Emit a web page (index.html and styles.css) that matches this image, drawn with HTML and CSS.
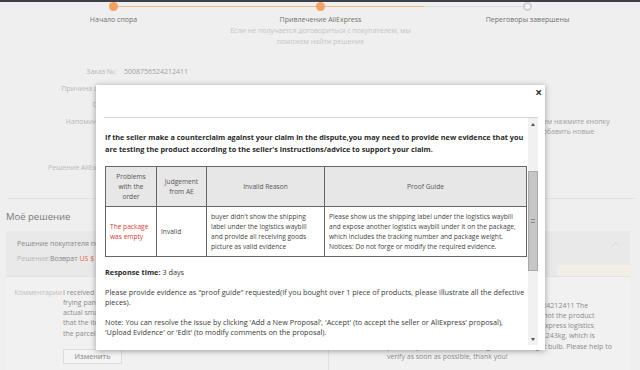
FILE: index.html
```html
<!DOCTYPE html>
<html lang="ru">
<head>
    <meta charset="UTF-8">
    <title>Спор по заказу</title>
    <link rel="stylesheet" href="styles.css">
</head>
<body>
    <div class="topbar"></div>

    <div class="steps">
        <div class="step">
            <div class="step-head">
                <span class="seg"></span>
                <span class="dot"></span>
                <span class="seg on"></span>
            </div>
            <div class="step-title">Начало спора</div>
        </div>
        <div class="step">
            <div class="step-head">
                <span class="seg on"></span>
                <span class="dot"></span>
                <span class="seg on"></span>
            </div>
            <div class="step-title">Привлечение AliExpress</div>
            <div class="step-desc">Если не получается договориться с покупателем, мы<br>поможем найти решение</div>
        </div>
        <div class="step">
            <div class="step-head">
                <span class="seg off"></span>
                <span class="dot todo"></span>
                <span class="seg"></span>
            </div>
            <div class="step-title">Переговоры завершены</div>
        </div>
    </div>

    <div class="info">
        <div class="info-row">
            <div class="info-label">Заказ №:</div>
            <div class="info-value">5008756524212411</div>
        </div>
        <div class="info-row">
            <div class="info-label">Причина спора:</div>
            <div class="info-value">Посылка пустая</div>
        </div>
        <div class="info-row">
            <div class="info-label">Статус:</div>
            <div class="info-value">Ожидает ответа продавца</div>
        </div>
        <div class="info-row">
            <div class="info-label">Напоминание:</div>
            <div class="info-value nowrap">Если продавец не согласен с вашим предложением и вы хотите оспорить его ответ, загрузите фото или видео товара, затем нажмите кнопку<br>«Предоставить доказательства» в течение 7 дней, чтобы загрузить все подтверждающие фото или видео, и не забудьте добавить новые<br>доказательства по спору</div>
        </div>
        <div class="info-row spaced">
            <div class="info-label">Решение AliExpress:</div>
            <div class="info-value">Ожидается</div>
        </div>
    </div>

    <div class="divider"></div>

    <h2 class="section-title">Моё решение</h2>

    <div class="panel">
        <div class="panel-head">
            <div class="panel-lines">
                <div class="muted">Решение покупателя по спору</div>
                <div><span class="muted">Решение:</span>Возврат <span class="price">US $ 9.45</span></div>
            </div>
            <div class="panel-side">
                <svg class="chevron" width="12" height="7" viewBox="0 0 12 7"><polyline points="1,6 6,1 11,6" fill="none" stroke="#d2d2d2" stroke-width="1"/></svg>
                <div class="note-bar"></div>
            </div>
        </div>

        <div class="comments">
            <div class="comment-col">
                <div class="comment-row">
                    <div class="comment-label">Комментарии</div>
                    <div class="comment-text">I received the parcel, but instead of a<br>frying pan there was only a light bulb. The<br>actual small weight of the parcel shows<br>that the item was never sent to me, and<br>the parcel label belongs to another order.</div>
                </div>
                <button class="btn">Изменить</button>
            </div>
            <div class="comment-col side">
                <div class="comment-row">
                    <div class="comment-label">Продавец</div>
                    <div class="comment-text nowrap">Hello, we have checked the order No. 5008756524212411 The<br>shipping label of the parcel shows the sender is not the product<br>seller. Also, according to the tracking data of AliExpress logistics<br>system, the real weight of the parcel you got is 0.243kg, which is<br>practically the same as the weight of a small light bulb. Please help to<br>verify as soon as possible, thank you!</div>
                </div>
            </div>
        </div>
    </div>

    <div class="modal">
        <div class="modal-top">
            <span class="modal-close">×</span>
        </div>
        <div class="modal-body">
            <div class="modal-content">
                <p class="lead">If the seller make a counterclaim against your claim in the dispute,you may need to provide new evidence that you<br>are testing the product according to the seller's instructions/advice to support your claim.</p>

                <table class="guide">
                    <tr>
                        <th class="c1">Problems with the order</th>
                        <th class="c2">Judgement from AE</th>
                        <th class="c3">Invalid Reason</th>
                        <th class="c4">Proof Guide</th>
                    </tr>
                    <tr>
                        <td class="problem">The package was empty</td>
                        <td>Invalid</td>
                        <td>buyer didn't show the shipping label under the logistics waybill and provide all receiving goods picture as valid evidence</td>
                        <td>Please show us the shipping label under the logistics waybill and expose another logistics waybill under it on the package, which includes the tracking number and package weight. Notices: Do not forge or modify the required evidence.</td>
                    </tr>
                </table>

                <p class="para"><b>Response time:</b> 3 days</p>
                <p class="para">Please provide evidence as "proof guide" requested(If you bought over 1 piece of products, please illustrate all the defective pieces).</p>
                <p class="para">Note: You can resolve the issue by clicking 'Add a New Proposal', 'Accept' (to accept the seller or AliExpress' proposal), 'Upload Evidence' or 'Edit' (to modify comments on the proposal).</p>
            </div>
            <div class="scrollbar">
                <div class="arrow up"></div>
                <div class="track">
                    <div class="thumb"><span class="grip"></span></div>
                </div>
                <div class="arrow down"></div>
            </div>
        </div>
    </div>
</body>
</html>
```

FILE: styles.css
```css
* {
    margin: 0;
    padding: 0;
    box-sizing: border-box;
}

body {
    font-family: 'Open Sans', 'Noto Sans', sans-serif;
    font-size: 7px;
    line-height: 10px;
    background-color: #efefef;
    color: #999;
    width: 640px;
    height: 370px;
    overflow: hidden;
    position: relative;
}

.nowrap {
    white-space: nowrap;
}

.topbar {
    height: 2px;
    background: #3d4048;
}

/* stepper */
.steps {
    display: grid;
    grid-template-columns: repeat(3, 207px);
    padding: 0 10px;
}

.step {
    text-align: center;
}

.step-head {
    display: flex;
    align-items: center;
    height: 9px;
}

.seg {
    flex: 1;
    height: 1.5px;
}

.seg.on {
    background: #f3b583;
}

.seg.off {
    background: #dcdcdc;
}

.dot {
    width: 9px;
    height: 9px;
    border-radius: 50%;
    background: #f2a263;
    flex-shrink: 0;
}

.dot.todo {
    background: #f6f6f6;
    border: 2px solid #d0d0d0;
}

.step-title {
    margin-top: 4px;
    color: #707070;
}

.step-desc {
    color: #c4c4c4;
    line-height: 11px;
}

/* order info */
.info {
    margin-top: 20px;
}

.info-row {
    display: flex;
    gap: 8px;
    margin-bottom: 6px;
}

.info-row.spaced {
    margin-top: 15px;
}

.info-label {
    width: 116px;
    flex-shrink: 0;
    text-align: right;
    color: #b8b8b8;
}

.info-value {
    color: #a0a0a0;
    line-height: 10.5px;
}

.divider {
    height: 1px;
    background: #e2e2e2;
    margin: 24px 5px 0 7px;
}

.section-title {
    font-size: 9.5px;
    font-weight: 400;
    line-height: 14px;
    color: #777;
    margin: 11px 0 0 6px;
}

/* my decision panel */
.panel {
    margin: 7px 10px 0 6px;
}

.panel-head {
    display: flex;
    justify-content: space-between;
    background: #e9e9e9;
    padding: 8px 0 0 11px;
    height: 45px;
}

.panel-lines div {
    margin-bottom: 5px;
    color: #888;
}

.muted {
    color: #b5b5b5;
}

.price {
    color: #e8623a;
}

.panel-side {
    display: flex;
    flex-direction: column;
    align-items: flex-end;
    width: 80px;
}

.chevron {
    margin: 3px 8px 0 0;
}

.note-bar {
    margin-top: 18px;
    width: 73px;
    height: 14px;
    background: #f3eee6;
}

.comments {
    display: grid;
    grid-template-columns: 322px 1fr;
    background: #f1f1f1;
    border-top: 1px solid #e3e3e3;
    height: 94px;
}

.comment-col {
    padding: 11px 0 0 0;
}

.comment-col.side {
    border-left: 1px solid #e0e0e0;
    padding-top: 24px;
}

.comment-row {
    display: flex;
    gap: 1px;
}

.comment-label {
    width: 56px;
    flex-shrink: 0;
    text-align: right;
    color: #bdbdbd;
}

.side .comment-label {
    width: 57px;
}

.comment-text {
    color: #8a8a8a;
    line-height: 10.3px;
}

.btn {
    display: block;
    margin: 10px 0 0 57px;
    width: 59px;
    height: 15px;
    font-family: inherit;
    font-size: 7px;
    font-weight: 600;
    color: #9a9a9a;
    background: #f4f4f4;
    border: 1px solid #dcdcdc;
}

/* modal */
.modal {
    position: absolute;
    left: 96px;
    top: 85px;
    width: 449px;
    height: 265px;
    background: #fff;
    box-shadow: 0 1px 6px rgba(0, 0, 0, 0.35);
    padding: 0 7px 5px 8px;
    display: flex;
    flex-direction: column;
}

.modal-top {
    height: 32px;
    display: flex;
    justify-content: flex-end;
    padding: 2px 0 0 0;
    margin-right: -4px;
}

.modal-close {
    font-size: 12px;
    line-height: 12px;
    font-weight: 700;
    color: #333;
}

.modal-body {
    flex: 1;
    display: flex;
    border-top: 1px solid #d4d4d4;
    overflow: hidden;
}

.modal-content {
    flex: 1;
    padding: 13px 0 0 1px;
    font-size: 7.3px;
    color: #3a3a3a;
    overflow: hidden;
}

.lead {
    font-weight: 700;
    line-height: 12px;
    color: #2a2a2a;
}

.guide {
    width: 422px;
    margin-top: 11px;
    border-collapse: collapse;
    font-size: 6.6px;
    line-height: 10px;
}

.guide th,
.guide td {
    border: 1px solid #666;
}

.guide th {
    background: #e7e7e7;
    font-weight: 400;
    color: #555;
    padding: 4px 4px;
    height: 40px;
}

.guide td {
    padding: 4px 4px;
    text-align: left;
    color: #444;
    height: 50px;
}

.c1 { width: 51px; }
.c2 { width: 50px; }
.c3 { width: 118px; }

.guide td.problem {
    color: #d23a30;
}

.para {
    margin-top: 10px;
}

.para b {
    color: #2a2a2a;
}

/* fake scrollbar */
.scrollbar {
    width: 10px;
    display: flex;
    flex-direction: column;
    background: #f1f1f1;
}

.arrow {
    height: 12px;
    position: relative;
}

.arrow::after {
    content: '';
    position: absolute;
    left: 3px;
    top: 5px;
    border-left: 2px solid transparent;
    border-right: 2px solid transparent;
}

.arrow.up::after {
    border-bottom: 3px solid #555;
}

.arrow.down::after {
    border-top: 3px solid #555;
}

.track {
    flex: 1;
}

.thumb {
    margin-top: 41px;
    height: 100px;
    background: #c6c6c6;
    border: 1px solid #a9a9a9;
    display: flex;
    align-items: center;
    justify-content: center;
}

.grip {
    width: 4px;
    height: 4px;
    border-top: 1px solid #888;
    border-bottom: 1px solid #888;
    position: relative;
}
```
